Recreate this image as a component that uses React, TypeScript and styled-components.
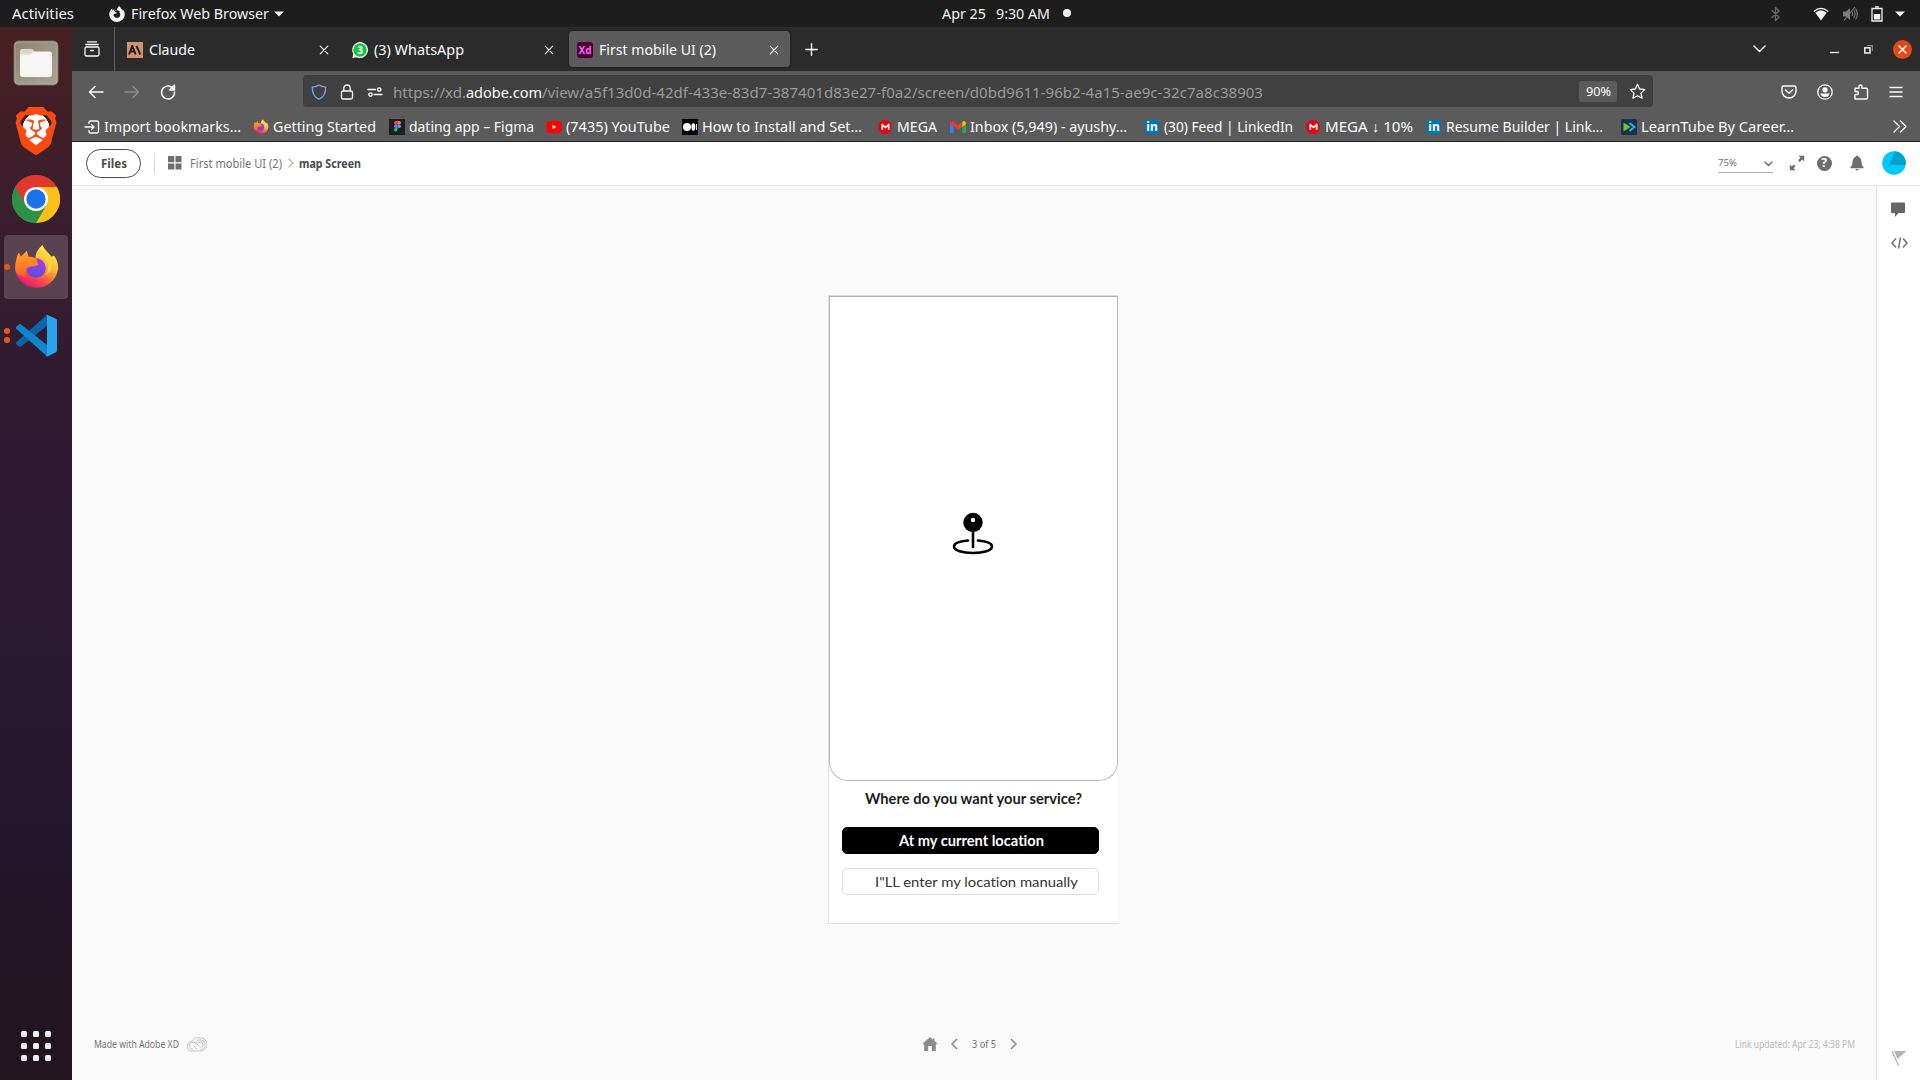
import React, { useLayoutEffect, useRef, useState } from "react";
import styled, { createGlobalStyle } from "styled-components";
import { SiBrave, SiFirefoxbrowser } from "react-icons/si";

const Global = createGlobalStyle`
  *, *::before, *::after { box-sizing: border-box; }
  body { margin: 0; background: #fafafa; overflow: hidden; }
  svg { display: block; flex: none; }
`;

/* ---------- text that fills a set width ---------- */

const Slot = styled.span<{ $w: number; $ml?: number }>`
  display: block;
  flex: none;
  width: ${(p) => p.$w}px;
  margin-left: ${(p) => p.$ml ?? 0}px;
  white-space: pre;
`;
const Stretch = styled.span`
  display: inline-block;
  transform-origin: 0 50%;
`;

function Fit({ w, ml, children }: { w: number; ml?: number; children: React.ReactNode }) {
  const ref = useRef<HTMLSpanElement>(null);
  const [scale, setScale] = useState(1);
  useLayoutEffect(() => {
    const el = ref.current;
    if (!el) return;
    el.style.transform = "none";
    const natural = el.getBoundingClientRect().width;
    const next = w / natural;
    el.style.transform = `scaleX(${next})`;
    setScale(next);
  }, [w]);
  return (
    <Slot $w={w} $ml={ml}>
      <Stretch ref={ref} style={{ transform: `scaleX(${scale})` }}>{children}</Stretch>
    </Slot>
  );
}

/* ---------- shell ---------- */

const Desktop = styled.div`
  width: 1920px;
  height: 1080px;
  display: flex;
  flex-direction: column;
  overflow: hidden;
  font-family: "Noto Sans", "Open Sans", sans-serif;
  font-size: 14.4px;
  line-height: 20px;
  color: #fbfbfe;
`;
const TopBar = styled.div`
  height: 27px;
  flex: none;
  display: grid;
  grid-template-columns: 942px 1fr auto;
  align-items: center;
  background: #1d1d1d;
  color: #f2f2f2;
  font-size: 14px;
`;
const TopGroup = styled.div<{ $pl?: number; $pr?: number }>`
  display: flex;
  align-items: center;
  padding-left: ${(p) => p.$pl ?? 0}px;
  padding-right: ${(p) => p.$pr ?? 0}px;
`;
const Gap = styled.span<{ $w: number }>`
  flex: none;
  width: ${(p) => p.$w}px;
`;
const Notice = styled.span`
  width: 8px;
  height: 8px;
  margin-left: 13px;
  margin-bottom: 1px;
  border-radius: 50%;
  background: #f2f2f2;
`;
const Body = styled.div`
  flex: 1;
  min-height: 0;
  display: flex;
`;

/* ---------- dock ---------- */

const Dock = styled.nav`
  width: 72px;
  flex: none;
  display: flex;
  flex-direction: column;
  align-items: center;
  padding: 4px 0 15px;
  background: linear-gradient(180deg, #482022 0%, #3d1e2b 14%, #311b31 32%, #2b1a30 52%, #25172b 78%, #22141d 100%);
`;
const Launcher = styled.div<{ $active?: boolean }>`
  position: relative;
  width: 64px;
  height: 64px;
  margin-bottom: 4px;
  display: grid;
  place-items: center;
  border-radius: 4px;
  background: ${(p) => (p.$active ? "#594350" : "transparent")};
`;
const Running = styled.span`
  position: absolute;
  left: 0;
  top: 0;
  bottom: 0;
  width: 6px;
  display: flex;
  flex-direction: column;
  justify-content: center;
  gap: 3px;
`;
const RunDot = styled.i`
  width: 6px;
  height: 6px;
  border-radius: 50%;
  background: #e95420;
`;
const LionBack = styled.div`
  width: 48px;
  height: 48px;
  display: grid;
  place-items: center;
  background: radial-gradient(ellipse 15px 19px at 50% 50%, #fff 92%, transparent 94%);
`;
const AppGrid = styled.div`
  margin-top: auto;
  margin-bottom: 4px;
  display: grid;
  grid-template-columns: repeat(3, 6px);
  gap: 6px;
`;
const AppCell = styled.i`
  width: 6px;
  height: 6px;
  border-radius: 1.5px;
  background: #eeeeec;
`;

/* ---------- browser chrome ---------- */

const Browser = styled.main`
  flex: 1;
  min-width: 0;
  display: flex;
  flex-direction: column;
`;
const TabStrip = styled.div`
  height: 44px;
  flex: none;
  display: flex;
  align-items: center;
  background: #2b2b2b;
`;
const RecentTabs = styled.div`
  width: 43px;
  height: 44px;
  padding-left: 12px;
  margin-right: 4px;
  display: flex;
  align-items: center;
  border-right: 1px solid #5c5c5c;
`;
const Tab = styled.div<{ $active?: boolean }>`
  width: 221px;
  height: 36px;
  margin-right: 4px;
  padding: 1px 11px 0 8px;
  display: flex;
  align-items: center;
  gap: 6px;
  border-radius: 4px;
  background: ${(p) => (p.$active ? "#5b5b5b" : "transparent")};
  box-shadow: ${(p) => (p.$active ? "0 0 3px rgba(0,0,0,.5)" : "none")};
  & > svg:last-child { margin-left: auto; }
`;
const NavBar = styled.div`
  height: 40px;
  flex: none;
  display: flex;
  align-items: flex-start;
  padding: 4px 17px 4px 15px;
  background: #5b5b5b;
`;
const NavButtons = styled.div`
  height: 33px;
  width: 216px;
  display: flex;
  align-items: center;
  gap: 18px;
`;
const UrlBar = styled.div`
  width: 1350px;
  height: 32px;
  display: flex;
  align-items: center;
  padding: 1px 7px 0 8px;
  border-radius: 4px;
  background: #404040;
  color: #9a9a9a;
  font-size: 14.6px;
`;
const UrlIcon = styled.span`
  width: 28px;
  display: flex;
`;
const Host = styled.span`color: #fbfbfe;`;
const Zoom = styled.span`
  width: 38px;
  height: 21px;
  margin-left: auto;
  margin-right: 12px;
  display: flex;
  align-items: center;
  justify-content: center;
  border-radius: 3px;
  background: #5b5b5b;
  color: #fbfbfe;
  font-size: 12.4px;
`;
const NavTools = styled.div`
  height: 33px;
  margin-left: auto;
  display: flex;
  align-items: center;
  gap: 20px;
`;
const Bookmarks = styled.div`
  height: 31px;
  flex: none;
  display: flex;
  align-items: center;
  padding: 1px 13px 0 12px;
  background: #5b5b5b;
  border-bottom: 1px solid #1c1b22;
  & > svg { margin-left: auto; }
`;
const Bookmark = styled.div<{ $ml: number }>`
  display: flex;
  align-items: center;
  gap: 4px;
  margin-left: ${(p) => p.$ml}px;
`;
const Mark = styled.span<{ $bg?: string; $r?: number; $s?: number; $c?: string; $fs?: number }>`
  width: ${(p) => p.$s ?? 16}px;
  height: ${(p) => p.$s ?? 16}px;
  margin: 0 ${(p) => (16 - (p.$s ?? 16)) / 2}px;
  flex: none;
  display: grid;
  place-items: center;
  border-radius: ${(p) => p.$r ?? 0}px;
  background: ${(p) => p.$bg ?? "transparent"};
  color: ${(p) => p.$c ?? "#fff"};
  font-size: ${(p) => p.$fs ?? 11}px;
  font-weight: 700;
  line-height: 1;
`;

/* ---------- XD page ---------- */

const XdHeader = styled.header`
  height: 44px;
  flex: none;
  display: flex;
  align-items: center;
  padding: 0 14px 1px;
  background: #fff;
  border-bottom: 1px solid #e5e5e5;
  color: #747474;
  font-size: 11.8px;
`;
const Pill = styled.div`
  width: 55px;
  height: 29px;
  display: flex;
  align-items: center;
  justify-content: center;
  border: 1px solid #4b4b4b;
  border-radius: 15px;
  color: #4b4b4b;
  font-weight: 700;
`;
const Rule = styled.span`
  width: 1px;
  height: 21px;
  margin: 0 13px;
  background: #dcdcdc;
`;
const Strong = styled.span`
  color: #4b4b4b;
  font-weight: 700;
`;
const HeaderTools = styled.div`
  margin-left: auto;
  display: flex;
  align-items: center;
`;
const ZoomSelect = styled.div`
  width: 55px;
  height: 20px;
  margin-right: 16px;
  display: flex;
  align-items: center;
  justify-content: space-between;
  border-bottom: 1px solid #b3b3b3;
  font-size: 9.8px;
  & > svg { margin-top: 2px; }
`;
const Workspace = styled.div`
  flex: 1;
  min-height: 0;
  display: flex;
`;
const Canvas = styled.section`
  flex: 1;
  display: flex;
  flex-direction: column;
  align-items: center;
  padding-top: 109px;
  background: #fafafa;
`;
const SideRail = styled.aside`
  width: 44px;
  display: flex;
  flex-direction: column;
  padding: 15px 0 14px 13px;
  background: #fff;
  border-left: 1px solid #e1e1e1;
  & > svg:last-child { margin-top: auto; }
`;
const Artboard = styled.div`
  width: 290px;
  height: 629px;
  margin-left: -3px;
  display: flex;
  flex-direction: column;
  background: #fff;
  border: 1px solid #dfdfdf;
  border-right: 0;
  font-family: "Lato", sans-serif;
  font-variant-ligatures: none;
`;
const MapPane = styled.div`
  height: 485px;
  display: flex;
  justify-content: center;
  padding-top: 214px;
  border: 1px solid #bdbdbd;
  border-top-color: #b0b0b0;
  border-radius: 0 0 19px 19px;
`;
const Question = styled.div`
  height: 36px;
  display: flex;
  align-items: center;
  padding-left: 36px;
  color: #1c1c1c;
  font-size: 14.3px;
  font-weight: 700;
`;
const Choice = styled.div<{ $solid?: boolean; $pl: number; $mt: number }>`
  width: 257px;
  height: 27px;
  flex: none;
  margin: ${(p) => p.$mt}px 0 0 13px;
  padding: 1px 0 0 ${(p) => p.$pl}px;
  display: flex;
  align-items: center;
  border: 1px solid ${(p) => (p.$solid ? "#000" : "#dedede")};
  border-radius: 5px;
  background: ${(p) => (p.$solid ? "#000" : "#fff")};
  color: ${(p) => (p.$solid ? "#fff" : "#333")};
  font-size: 14.2px;
  font-weight: ${(p) => (p.$solid ? 700 : 400)};
`;
const Footer = styled.footer`
  width: 100%;
  margin-top: auto;
  height: 72px;
  display: grid;
  grid-template-columns: 828px 1fr auto;
  align-items: center;
  padding: 0 21px 0 22px;
  color: #747474;
  font-size: 10.1px;
`;
const FootGroup = styled.div`
  display: flex;
  align-items: center;
`;
const Updated = styled.span`color: #b9b9b9;`;

/* ---------- drawings ---------- */

type LineProps = { w?: number; h?: number; box?: string; d: string; c?: string; sw?: number; cap?: "round" | "butt"; fill?: string };
const Line = ({ w = 16, h = w, box = `0 0 ${w} ${h}`, d, c = "#fbfbfe", sw = 1.3, cap = "round", fill = "none" }: LineProps) => (
  <svg width={w} height={h} viewBox={box} fill={fill} stroke={c} strokeWidth={sw} strokeLinecap={cap} strokeLinejoin="round">
    <path d={d} />
  </svg>
);
const Close = () => <Line w={10} d="M1.2 1.2l7.6 7.6M8.8 1.2L1.2 8.8" sw={1.1} />;
const Chevron = ({ left, c = "#8a8a8a" }: { left?: boolean; c?: string }) => (
  <Line w={7} h={12} d={left ? "M6 1L1 6l5 5" : "M1 1l5 5-5 5"} c={c} sw={1.5} cap="butt" />
);

const FilesIcon = () => (
  <svg width="46" height="46" viewBox="0 0 46 46">
    <defs>
      <linearGradient id="fb" x1="0" y1="0" x2="1" y2="1"><stop offset="0" stopColor="#8d8572" /><stop offset="1" stopColor="#aba492" /></linearGradient>
    </defs>
    <rect x="1" y="1" width="44" height="44" rx="4.5" fill="url(#fb)" stroke="#6f6a5c" />
    <rect x="2" y="2" width="42" height="42" rx="3.5" fill="none" stroke="#c0baa8" strokeOpacity=".6" />
    <path d="M7 32V11q0-2 2-2h9q2 0 3 2l1 2-3 3z" fill="#dcd7ca" />
    <path d="M7 14.500h9q2 0 3-1.500t3-1.500h14.500q2.500 0 2.500 2.500v20q0 3-3 3H10q-3 0-3-3z" fill="#f8f7f5" />
  </svg>
);
const ChromeIcon = () => (
  <svg width="48" height="48" viewBox="0 0 48 48">
    <circle cx="24" cy="24" r="24" fill="#2d9147" />
    <path d="M3.200 12A24 24 0 0 1 44.800 12H24L13.600 30z" fill="#e0382c" />
    <path d="M44.800 12A24 24 0 0 1 24 48L34.400 30 24 12z" fill="#fbc116" />
    <path d="M3.200 12L13.600 30H34.400L24 48A24 24 0 0 1 3.200 12z" fill="#2d9147" />
    <circle cx="24" cy="24" r="12" fill="#fff" />
    <circle cx="24" cy="24" r="9.700" fill="#1a73e8" />
  </svg>
);
const FirefoxIcon = ({ s, id }: { s: number; id: string }) => (
  <svg width={s} height={s} viewBox="0 0 46 48">
    <defs>
      <linearGradient id={id + "a"} x1=".85" y1=".1" x2=".3" y2="1"><stop offset="0" stopColor="#fff44f" /><stop offset=".38" stopColor="#ffb02e" /><stop offset=".7" stopColor="#ff4f42" /><stop offset="1" stopColor="#e6127e" /></linearGradient>
      <linearGradient id={id + "b"} x1=".7" y1="0" x2=".3" y2="1"><stop offset="0" stopColor="#a13df0" /><stop offset="1" stopColor="#5450d6" /></linearGradient>
      <linearGradient id={id + "c"} x1=".4" y1="0" x2=".5" y2="1"><stop offset="0" stopColor="#ffa62b" /><stop offset=".6" stopColor="#ff7a24" /><stop offset="1" stopColor="#ff5a38" /></linearGradient>
    </defs>
    <path d="M29 1c2 5 7 8 9 12l3-1c3 4 4.500 9 4 14A22.300 22.300 0 0 1 1 26C1 19 3 14 6 10l1 5 4-4 2 5 9-2c0-6 4-10 7-13z" fill={`url(#${id}a)`} />
    <circle cx="22.500" cy="24.500" r="10" fill={`url(#${id}b)`} />
    <path d="M22 13c7-2 13 2 13 10 0 4-1 7-3 9 8-4 9-13 4-19C33 9 25 8 22 13z" fill="#ffd23f" />
    <path d="M1.500 26C1.500 17 3 11 5 9l2 4 6-6 2 6q6-.5 9 4-1 2 1.500 4-4 2.500-8.500 2-3.500.5-4.500 3-1.500 4 1 8C7 33 2 31 1.500 26z" fill={`url(#${id}c)`} />
  </svg>
);
const CodeIcon = () => (
  <svg width="43" height="43" viewBox="0 0 43 43">
    <path d="M1 28.500L32 .8v11L6 32.500q-1 .8-2 0L1 30z" fill="#0a66a8" />
    <path d="M1 14.500v-1.500l3-2.600q1-.7 2 0L32 31v11L31 41.500z" fill="#0f86cf" />
    <path d="M31 1.200q.6-.8 1.600-.3L41 4.800q1 .5 1 1.700v30q0 1.200-1 1.700l-8.500 4q-1.500.6-2-.5 1.500.3 1.500-1.700V3q0-1.800-1-1.800z" fill="#27a4f0" />
  </svg>
);

const Battery = () => (
  <svg width="12" height="16" viewBox="0 0 12 16"><path d="M1 2.500h10V15H1zM4 .8h4" fill="none" stroke="#f2f2f2" strokeWidth="1.300" /><path d="M2.800 8h6.400v5.500H2.800z" fill="#f2f2f2" /></svg>
);
const Muted = () => (
  <svg width="16" height="16" viewBox="0 0 16 16"><path d="M1 5.500h3l4-3.500v12l-4-3.500H1z" fill="#7d7d7d" /><path d="M10 6q1.200 2 0 4M11.800 4q2.400 4 0 8M13.600 2.500q3.500 5.500 0 11M2 14.500L13 1" fill="none" stroke="#7d7d7d" strokeWidth="1.100" /></svg>
);
const Wifi = () => (
  <svg width="16" height="14" viewBox="0 0 16 14"><path d="M.8 4.500Q8-1.800 15.200 4.500" fill="none" stroke="#f2f2f2" strokeWidth="1.300" /><path d="M2.300 5.800Q8 .8 13.700 5.800L8 13.500z" fill="#f2f2f2" /></svg>
);
const Triangle = () => <svg width="10" height="6" viewBox="0 0 10 6"><path d="M0 .4h10L5 5.600z" fill="#f2f2f2" /></svg>;

const MegaMark = () => (
  <Mark $s={14} $bg="#e8040c" $r={7}>
    <Line w={9} h={8} d="M1.300 6.800V1.500L4.500 4.500 7.700 1.500v5.300" c="#fff" sw={1.700} cap="butt" />
  </Mark>
);
const LinkedInMark = () => <Mark $s={14} $bg="#0077b5" $r={1} $fs={12}>in</Mark>;

const bookmarks: { icon: React.ReactNode; text: string; w: number; ml: number }[] = [
  { icon: <Line d="M1 8h9M7.500 5.500L10 8l-2.500 2.500M5 4.500V3.500q0-1.500 1.500-1.500H13q1.500 0 1.500 1.500v9q0 1.500-1.500 1.500H6.500Q5 14 5 12.500v-1" />, text: "Import bookmarks…", w: 137, ml: 0 },
  { icon: <FirefoxIcon s={16} id="fs" />, text: "Getting Started", w: 103, ml: 12 },
  {
    icon: (
      <Mark $bg="#1e1e1e">
        <svg width="7" height="10.500" viewBox="0 0 8 12">
          <path d="M4 0H2a2 2 0 0 0 0 4h2z" fill="#f24e1e" /><path d="M4 0h2a2 2 0 0 1 0 4H4z" fill="#ff7262" />
          <path d="M4 4H2a2 2 0 0 0 0 4h2z" fill="#a259ff" /><circle cx="6" cy="6" r="2" fill="#1abcfe" /><path d="M4 8H2a2 2 0 1 0 2 2z" fill="#0acf83" />
        </svg>
      </Mark>
    ), text: "dating app – Figma", w: 125, ml: 13,
  },
  { icon: <svg width="16" height="12" viewBox="0 0 16 12"><rect x=".4" width="15.200" height="12" rx="3" fill="#f00" /><path d="M6.500 3.700v4.600L10.300 6z" fill="#fff" /></svg>, text: "(7435) YouTube", w: 104, ml: 12 },
  { icon: <Mark $bg="#000"><svg width="14" height="8" viewBox="0 0 14 8"><circle cx="4" cy="4" r="4" fill="#fff" /><ellipse cx="10.300" cy="4" rx="1.900" ry="3.700" fill="#fff" /><rect x="12.900" y="1" width="1" height="6" fill="#fff" /></svg></Mark>, text: "How to Install and Set…", w: 160, ml: 12 },
  { icon: <MegaMark />, text: "MEGA", w: 40, ml: 15 },
  { icon: <svg width="16" height="12" viewBox="0 0 16 12"><path d="M0 2v9q0 1 1 1h2.700V4z" fill="#2a84f5" /><path d="M12.300 4v8H15q1 0 1-1V2z" fill="#2ba84a" /><path d="M0 2Q.5-.8 3.700.8L8 4.200v4.500L0 3z" fill="#ea3b30" /><path d="M8 8.700V4.200L12.300.8V5.500z" fill="#ea4335" /><path d="M12.300.8Q15.500-.8 16 2v1l-3.700 2.700z" fill="#fbbc04" /></svg>, text: "Inbox (5,949) - ayushy…", w: 157, ml: 13 },
  { icon: <LinkedInMark />, text: "(30) Feed | LinkedIn", w: 129, ml: 17 },
  { icon: <MegaMark />, text: "MEGA ↓ 10%", w: 88, ml: 12 },
  { icon: <LinkedInMark />, text: "Resume Builder | Link…", w: 157, ml: 13 },
  { icon: <Mark $bg="#17324a" $r={2}><svg width="13" height="10" viewBox="0 0 13 10"><path d="M6.500 1L11.500 5l-5 4" fill="none" stroke="#27b6e8" strokeWidth="1.800" /><path d="M.5.5L7.500 5 .5 9.500z" fill="#6fc52e" /></svg></Mark>, text: "LearnTube By Career…", w: 153, ml: 18 },
];

export default function App() {
  return (
    <Desktop>
      <Global />
      <TopBar>
        <TopGroup $pl={12}>
          <Fit w={62}>Activities</Fit>
          <Gap $w={35} />
          <SiFirefoxbrowser size={16} color="#f2f2f2" />
          <Fit w={138} ml={6}>Firefox Web Browser</Fit>
          <Gap $w={5} />
          <Triangle />
        </TopGroup>
        <TopGroup>
          <Fit w={44}>Apr 25</Fit>
          <Fit w={54} ml={10}>9:30 AM</Fit>
          <Notice />
        </TopGroup>
        <TopGroup $pr={15}>
          <Line w={9} h={16} d="M1 4.500l7 6.500-3.500 3.500v-13L8 5 1 11.500" c="#6a6a6a" sw={1.3} />
          <Gap $w={33} /><Wifi />
          <Gap $w={13} /><Muted />
          <Gap $w={13} /><Battery />
          <Gap $w={12} /><Triangle />
        </TopGroup>
      </TopBar>
      <Body>
        <Dock>
          <Launcher><FilesIcon /></Launcher>
          <Launcher><LionBack><SiBrave size={48} color="#fb4a10" /></LionBack></Launcher>
          <Launcher><ChromeIcon /></Launcher>
          <Launcher $active><Running><RunDot /></Running><FirefoxIcon s={47} id="fl" /></Launcher>
          <Launcher><Running><RunDot /><RunDot /></Running><CodeIcon /></Launcher>
          <AppGrid>{Array.from({ length: 9 }, (_, i) => <AppCell key={i} />)}</AppGrid>
        </Dock>
        <Browser>
          <TabStrip>
            <RecentTabs><Line w={16} d="M3.500.8h9M1.800 3.500h12.400M2.500 6h11q1.500 0 1.500 1.500v6q0 1.500-1.500 1.500h-11Q1 15 1 13.500v-6Q1 6 2.500 6zM6.500 9.500h3" /></RecentTabs>
            <Tab>
              <Mark $bg="#d4906f"><Line w={14} h={10} d="M1 9.500L4.300.8 7.600 9.500M2.300 6.500h4M8.500.8L12.300 9.500" c="#1f1a18" sw={1.900} cap="butt" /></Mark>
              <Fit w={46}>Claude</Fit><Close />
            </Tab>
            <Tab>
              <Mark $fs={10}>
                <svg width="16" height="16" viewBox="0 0 16 16"><path d="M8 0a8 8 0 1 1-3.500 15.200L.3 16l1-4A8 8 0 0 1 8 0z" fill="#fff" /><circle cx="8" cy="8" r="6.700" fill="#15c340" /><text x="8" y="11.700" fontSize="10" fontWeight="700" textAnchor="middle" fill="#fff">3</text></svg>
              </Mark>
              <Fit w={90}>(3) WhatsApp</Fit><Close />
            </Tab>
            <Tab $active>
              <Mark $bg="#470137" $r={3} $c="#ff61f6" $fs={10}>Xd</Mark>
              <Fit w={117}>First mobile UI (2)</Fit><Close />
            </Tab>
            <Gap $w={11} />
            <Line w={13} h={14} box="0 -1 13 14" d="M6.500.8v11.400M.8 6.500h11.400" sw={1.4} />
            <Gap $w={935} />
            <Line w={13} h={8} d="M1 1l5.500 5.500L12 1" sw={1.5} />
            <Gap $w={64} />
            <Line w={9} h={10} d="M0 8.500h9" cap="butt" />
            <Gap $w={25} />
            <svg width="9" height="9" viewBox="0 0 9 9" fill="none"><path d="M3 .7h5.300V6" stroke="#8d8d8d" strokeWidth="1.200" /><rect x=".8" y="2.800" width="5.200" height="5.200" stroke="#fff" strokeWidth="1.400" /></svg>
            <Gap $w={21} />
            <Mark $s={19} $bg="#e04a17" $r={10}><Line w={9} d="M1 1l7 7M8 1L1 8" sw={1.5} /></Mark>
          </TabStrip>
          <NavBar>
            <NavButtons>
              <Line w={18} d="M2.500 9h13.500M8 3.500L2.500 9 8 14.500" sw={1.4} />
              <Line w={18} d="M2 9h13.500M10 3.500L15.500 9 10 14.500" c="#8f8f8f" sw={1.4} />
              <Line w={18} d="M14.800 6.500A6.500 6.500 0 1 0 15.500 9M15.500 2v5h-5z" sw={1.400} />
            </NavButtons>
            <UrlBar>
              <UrlIcon>
                <svg width="16" height="16" viewBox="0 0 16 16" fill="none"><defs><linearGradient id="sh" x1="1" y1="0" x2="0" y2="1"><stop offset="0" stopColor="#a78bf5" /><stop offset="1" stopColor="#2bc8ee" /></linearGradient></defs><path d="M8 .9c2 1.500 4.500 2 6.700 2.300 0 5.800-1.700 10-6.700 12-5-2-6.700-6.200-6.700-12C3.500 2.900 6 2.400 8 .9z" stroke="url(#sh)" strokeWidth="1.300" strokeLinejoin="round" /></svg>
              </UrlIcon>
              <UrlIcon><Line d="M4 7h8q1.500 0 1.500 1.500v5q0 1.500-1.500 1.500H4Q2.500 15 2.500 13.500v-5Q2.500 7 4 7zM4.800 7V4.200a3.200 3.200 0 0 1 6.400 0V7" /></UrlIcon>
              <UrlIcon><Line d="M1 5.500h7.500M7 10.500h8M10.500 5.500a1.700 1.700 0 1 0 3.400 0a1.700 1.700 0 1 0-3.400 0M1.800 10.500a1.700 1.700 0 1 0 3.400 0a1.700 1.700 0 1 0-3.400 0" sw={1.3} /></UrlIcon>
              <Fit w={73} ml={-2}>https://xd.</Fit>
              <Host><Fit w={76}>adobe.com</Fit></Host>
              <Fit w={721}>/view/a5f13d0d-42df-433e-83d7-387401d83e27-f0a2/screen/d0bd9611-96b2-4a15-ae9c-32c7a8c38903</Fit>
              <Zoom><Fit w={25}>90%</Fit></Zoom>
              <Line w={17} d="M8.500 1.300l2.200 4.700 5 .6-3.700 3.500 1 5.100-4.500-2.500L4 15.200l1-5.100L1.300 6.600l5-.6z" />
            </UrlBar>
            <NavTools>
              <Line d="M2.500 2h11q1.500 0 1.500 1.500V7q0 3-2 5t-5 2-5-2-2-5V3.500Q1 2 2.500 2zM4.500 6L8 9.300 11.500 6" sw={1.4} />
              <svg width="16" height="16" viewBox="0 0 16 16"><circle cx="8" cy="8" r="7.200" fill="none" stroke="#fbfbfe" strokeWidth="1.300" /><circle cx="8" cy="5.800" r="2.600" fill="#fbfbfe" /><path d="M3.300 9.500h9.400Q11.500 13 8 13T3.300 9.500z" fill="#fbfbfe" /></svg>
              <Line d="M2 15V10.500h2q1.500 0 1.500-1.500T4 7.500H2V5q0-.7.7-.7H6V2.800Q6 1 7.500 1T9 2.800v1.500h4.300q1.200 0 1.200 1.200v8.300q0 1.200-1.200 1.200z" sw={1.4} />
              <Line w={14} d="M1 2.500h12M1 7h12M1 11.500h12" sw={1.4} />
            </NavTools>
          </NavBar>
          <Bookmarks>
            {bookmarks.map((b, i) => (
              <Bookmark key={i} $ml={b.ml}>{b.icon}<Fit w={b.w}>{b.text}</Fit></Bookmark>
            ))}
            <Line w={14} h={13} d="M1 1l5.500 5.500L1 12M7.500 1L13 6.500 7.500 12" />
          </Bookmarks>
          <XdHeader>
            <Pill><Fit w={26}>Files</Fit></Pill>
            <Rule />
            <svg width="14" height="14" viewBox="0 0 14 14" fill="#6e6e6e"><path d="M0 0h6.300v6.300H0zM7.500 0h6v6.300h-6zM0 7.500h6.300v6H0zM7.500 7.500h6v6h-6z" /></svg>
            <Fit w={92} ml={8}>First mobile UI (2)</Fit>
            <Gap $w={6} /><Line w={6} h={10} d="M.8.8L5 5 .8 9.200" c="#b0b0b0" sw={1.2} />
            <Strong><Fit w={62} ml={5}>map Screen</Fit></Strong>
            <HeaderTools>
              <ZoomSelect><Fit w={19}>75%</Fit><Line w={9} h={6} d="M1 1l3.500 3.500L8 1" c="#6e6e6e" sw={1.5} /></ZoomSelect>
              <svg width="16" height="16" viewBox="0 0 16 16"><path d="M9.500.8h5.700v5.700l-2-2-2.400 2.400-1.700-1.700 2.400-2.400zM.8 9.500v5.700h5.700l-2-2 2-2-1.700-1.700-2 2z" fill="#6e6e6e" /></svg>
              <Gap $w={11} />
              <Mark $s={15} $bg="#6e6e6e" $r={8} $fs={12}>?</Mark>
              <Gap $w={18} />
              <svg width="14" height="16" viewBox="0 0 14 16" fill="#6e6e6e"><path d="M7 .5q1.300 0 1.300 1.300Q11.500 3 11.500 7q0 4 2.200 5.700v.6H.3v-.6Q2.500 11 2.500 7q0-4 3.200-5.200Q5.700.5 7 .5zM5.300 14h3.400q-.4 1.500-1.700 1.500T5.300 14z" /></svg>
              <Gap $w={18} />
              <svg width="24" height="25" viewBox="0 0 24 25"><circle cx="12" cy="12" r="11.800" fill="#00c8ff" /><path d="M7 14L13 .25A11.800 11.800 0 0 1 23.600 14z" fill="#00a1cc" /></svg>
            </HeaderTools>
          </XdHeader>
          <Workspace>
            <Canvas>
              <Artboard>
                <MapPane>
                  <svg width="42" height="46" viewBox="0 0 42 46">
                    <circle cx="21" cy="11.500" r="9.700" /><circle cx="21" cy="9" r="2.200" fill="#fff" />
                    <path d="M21 20v16M16 29.500C7 30.300 2 32.500 2 35.500c0 4 8.500 6.500 19 6.500s19-2.500 19-6.500c0-3-5-5.200-14-6" fill="none" stroke="#000" strokeWidth="2.600" strokeLinecap="round" />
                  </svg>
                </MapPane>
                <Question><Fit w={217}>Where do you want your service?</Fit></Question>
                <Choice $solid $pl={56} $mt={10}><Fit w={145}>At my current location</Fit></Choice>
                <Choice $pl={32} $mt={14}><Fit w={203}>I"LL enter my location manually</Fit></Choice>
              </Artboard>
              <Footer>
                <FootGroup>
                  <Fit w={85}>Made with Adobe XD</Fit>
                  <Gap $w={8} />
                  <svg width="20" height="15" viewBox="0 0 20 15" fill="none" stroke="#bcbcbc" strokeWidth=".9"><path d="M5.500 14A5 5 0 0 1 5 4Q8-.5 13 .8a6.300 6.300 0 0 1 1 13.200zM6 12.300a3.600 3.600 0 0 1 0-7.200q2 0 3.500 1.500l3 3M13.500 12.300a4.700 4.700 0 1 0-4.700-6M10 12.300L6 8.300M13.500 10.300a2.700 2.700 0 1 0-2.600-3.600" /></svg>
                </FootGroup>
                <FootGroup>
                  <svg width="16" height="14" viewBox="0 0 16 14" fill="#8a8a8a"><path d="M8 0l3 2.700V1.500h1.500V4L16 7.300h-2.200V14h-4V9H6.200v5h-4V7.300H0z" /></svg>
                  <Gap $w={13} /><Chevron left />
                  <Fit w={24} ml={14}>3 of 5</Fit>
                  <Gap $w={14} /><Chevron />
                </FootGroup>
                <Updated><Fit w={120}>Link updated: Apr 23, 4:38 PM</Fit></Updated>
              </Footer>
            </Canvas>
            <SideRail>
              <svg width="16" height="16" viewBox="-1 -1 16 16"><path d="M1 .5h12q1 0 1 1V10q0 1-1 1H7.500L4 15v-4H1q-1 0-1-1V1.500q0-1 1-1z" fill="#666" /></svg>
              <svg width="18" height="52" viewBox="-1 0 18 52"><path d="M5 21.500L1 26l4 4.500M12 21.500L16 26l-4 4.500M9.500 20.500l-2 11" fill="none" stroke="#6e6e6e" strokeWidth="1.500" /></svg>
              <svg width="17" height="16" viewBox="-1 0 17 16"><path d="M3 1h12.500L8 7.500 6.500 9z" fill="#b3b3b3" /><path d="M1 1l6.500 14.500" stroke="#b3b3b3" strokeWidth="1.300" /></svg>
            </SideRail>
          </Workspace>
        </Browser>
      </Body>
    </Desktop>
  );
}
